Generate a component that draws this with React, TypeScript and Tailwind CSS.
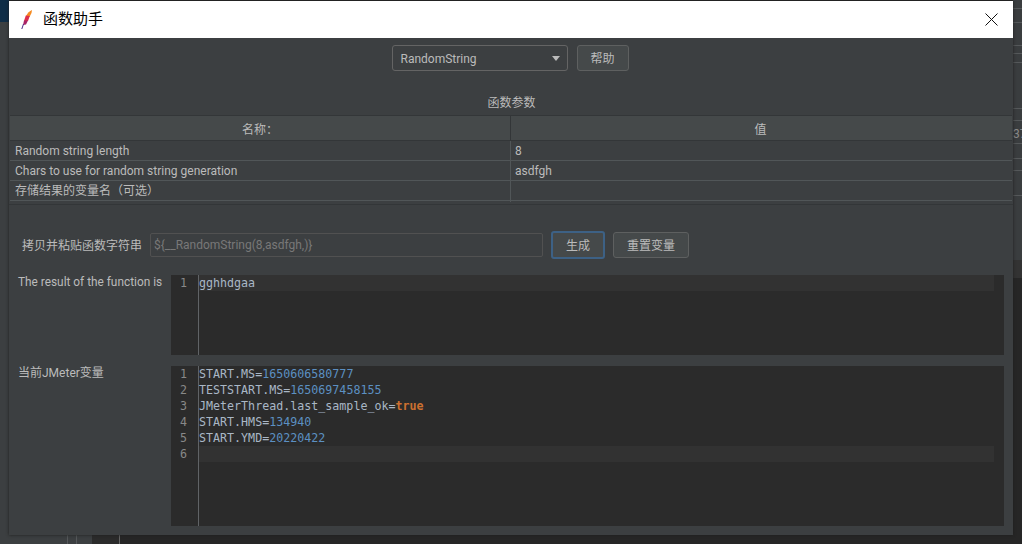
import React from "react";

const cjk = "font-['Liberation_Sans','Noto_Sans_CJK_SC',sans-serif]";
const ui = "font-['Roboto','Noto_Sans_CJK_SC',sans-serif]";
const mono = "font-['DejaVu_Sans_Mono','Noto_Sans_CJK_SC',monospace]";

function Feather() {
  return (
    <svg width="12" height="20" viewBox="0 0 12 20" className="shrink-0">
      <path d="M11 0 L10.5 3 L8.5 7 L5 6 C6.5 3 8.5 1 11 0Z" fill="#f58b22" />
      <path d="M8.8 6 L4.8 5.5 L3 11 L7 11 Z" fill="#dc2f4b" />
      <path d="M7 10.5 L3 10.5 L2 15 L5 14.5 Z" fill="#a82367" />
      <path d="M2.5 14 L0.8 19" stroke="#4b2a86" strokeWidth="1" fill="none" />
    </svg>
  );
}

function Params() {
  const rows = [
    ["Random string length", "8"],
    ["Chars to use for random string generation", "asdfgh"],
    ["存储结果的变量名（可选）", ""],
  ];
  return (
    <div className={`ml-px mr-px text-[12px] text-[#bbbbbb] ${ui}`}>
      <div className="grid h-[26px] grid-cols-[501px_1fr] border-y border-[#333638] bg-[#45494a] leading-[28px]">
        <div className="border-r border-[#333638] text-center">名称：</div>
        <div className="pr-[2px] text-center">值</div>
      </div>
      {rows.map(([name, value]) => (
        <div key={name} className="grid h-[20px] grid-cols-[501px_1fr] border-b border-[#515658] leading-[21px]">
          <div className="border-r border-[#515658] pl-[5px]">{name}</div>
          <div className="pl-[4px]">{value}</div>
        </div>
      ))}
    </div>
  );
}

function Editor({
  lines,
  active,
  height,
}: {
  lines: React.ReactNode[];
  active: number;
  height: string;
}) {
  return (
    <div className={`flex flex-1 bg-[#2b2b2b] pr-[10px] text-[11.66px] leading-[16px] ${height} ${mono}`}>
      <div className="w-[28px] shrink-0 border-r border-[#606366] pr-[11px] text-right text-[#888888]">
        {lines.map((_, i) => (
          <div key={i}>{i + 1}</div>
        ))}
      </div>
      <div className="flex-1 text-[#a9b7c6]">
        {lines.map((line, i) => (
          <div key={i} className={`h-[16px] whitespace-pre ${i === active ? "bg-[#323232]" : ""}`}>
            {line}
          </div>
        ))}
      </div>
    </div>
  );
}

function Num({ children }: { children: React.ReactNode }) {
  return <span className="text-[#5c90c2]">{children}</span>;
}

function RightStrip() {
  return (
    <div className="absolute right-0 top-0 flex h-[544px] w-[9px] flex-col bg-[#262626]">
      <div className="h-[9px] shrink-0 border-b border-[#55585a] bg-[#3a3d3f]" />
      <div className="h-[14px] shrink-0 border-b border-[#55585a] bg-[#3a3d3f]" />
      <div className="h-[23px] shrink-0 border-b border-[#55585a] bg-[#3a3d3f]" />
      <div className="h-[8px] shrink-0 border-b border-[#55585a] bg-[#3a3d3f]" />
      <div className="h-[9px] shrink-0 border-b border-[#55585a] bg-[#3a3d3f]" />
      <div className="h-[46px] shrink-0 border-b border-[#55585a] bg-[#3a3d3f]" />
      <div className="h-[12px] shrink-0 border-b border-[#55585a] bg-[#3a3d3f]" />
      <div className={`h-[23px] shrink-0 overflow-hidden border-b border-[#55585a] bg-[#3a3d3f] text-[12px] leading-[26px] text-[#8a8a8a] ${ui}`}>37</div>
      <div className="h-[15px] shrink-0 border-b border-[#55585a] bg-[#3a3d3f]" />
      <div className="h-[12px] shrink-0 border-b border-[#55585a] bg-[#3a3d3f]" />
      <div className="h-[25px] shrink-0 border-b border-[#55585a] bg-[#3a3d3f]" />
      <div className="h-[64px] shrink-0 bg-[#3a3d3f]" />
      <div className="h-[18px] shrink-0 bg-[#333333]" />
    </div>
  );
}

function BottomStrip() {
  return (
    <div className="absolute bottom-0 left-0 flex h-[9px] w-[130px]">
      <div className="w-[68px] border-r border-[#55585a] bg-[#3c3f41]" />
      <div className="w-[9px] border-r border-[#55585a] bg-[#3c3f41]" />
      <div className="w-[15px] bg-[#3c3f41]" />
      <div className="w-[28px] border-r border-[#666666] bg-[#2b2b2b]" />
    </div>
  );
}

export default function App() {
  return (
    <div className="relative h-[544px] w-[1022px] overflow-hidden bg-[#262626]">
      <div className="absolute left-0 top-0 h-[544px] w-[9px] bg-[#3c3f41]">
        <div className="h-[22px] bg-[#0f2d47]" />
      </div>
      <RightStrip />
      <BottomStrip />

      <div className="absolute left-[9px] top-px flex h-[534px] w-[1004px] flex-col bg-[#3c3f41] shadow-[0_0_3px_#1e1e1e]">
        <div className="flex h-[37px] shrink-0 items-center bg-white pl-[12px] pr-[15px]">
          <Feather />
          <span className={`ml-[10px] text-[15px] text-black ${cjk}`}>函数助手</span>
          <svg width="13" height="13" viewBox="0 0 13 13" className="ml-auto">
            <path d="M0.5 0.5 L12.5 12.5 M12.5 0.5 L0.5 12.5" stroke="#111" strokeWidth="1" />
          </svg>
        </div>

        <div className={`mt-[7px] flex justify-center gap-[9px] pr-[2px] text-[12px] text-[#bbbbbb] ${ui}`}>
          <div className="flex h-[26px] w-[176px] items-center justify-between rounded-[3px] border border-[#646464] pl-[8px] pr-[7px] pt-px">
            <span>RandomString</span>
            <span className="h-0 w-0 border-x-[4px] border-t-[5px] border-x-transparent border-t-[#bbbbbb]" />
          </div>
          <div className="flex h-[26px] w-[52px] items-center justify-center rounded-[3px] border border-[#5e6060] bg-[#45494a] pt-px">
            帮助
          </div>
        </div>

        <div className={`mt-[22px] h-[22px] pl-[1px] text-center text-[12px] leading-[20px] text-[#bbbbbb] ${ui}`}>函数参数</div>

        <Params />
        <div className="mt-[3px] border-t border-[#333638]" />

        <div className={`mt-[27px] flex h-[26px] items-center pl-[13px] text-[12px] text-[#bbbbbb] ${ui}`}>
          <span className="w-[128px] pt-px">拷贝并粘贴函数字符串</span>
          <div className="flex h-[24px] w-[393px] items-center rounded-[2px] border border-[#515151] pl-[3px] text-[#787878]">
            {"${__RandomString(8,asdfgh,)}"}
          </div>
          <div className="ml-[8px] flex h-[28px] w-[54px] shrink-0 items-center justify-center rounded-[3px] border-2 border-[#3d6185] bg-[#45494a] pt-px">
            生成
          </div>
          <div className="ml-[8px] flex h-[26px] w-[76px] shrink-0 items-center justify-center rounded-[3px] border border-[#5e6060] bg-[#45494a] pt-px">
            重置变量
          </div>
        </div>

        <div className="mt-[17px] flex pl-[9px] pr-[9px]">
          <div className={`w-[153px] shrink-0 whitespace-nowrap text-[11.85px] leading-[14px] text-[#bbbbbb] ${ui}`}>The result of the function is</div>
          <Editor height="h-[80px]" active={0} lines={["gghhdgaa"]} />
        </div>

        <div className="mt-[11px] flex pl-[9px] pr-[9px]">
          <div className={`w-[153px] shrink-0 text-[12px] leading-[14px] text-[#bbbbbb] ${ui}`}>当前JMeter变量</div>
          <Editor
            height="h-[160px]"
            active={5}
            lines={[
              <>START.MS=<Num>1650606580777</Num></>,
              <>TESTSTART.MS=<Num>1650697458155</Num></>,
              <>JMeterThread.last_sample_ok=<span className="font-bold text-[#cc7030]">true</span></>,
              <>START.HMS=<Num>134940</Num></>,
              <>START.YMD=<Num>20220422</Num></>,
              "",
            ]}
          />
        </div>
      </div>
    </div>
  );
}
